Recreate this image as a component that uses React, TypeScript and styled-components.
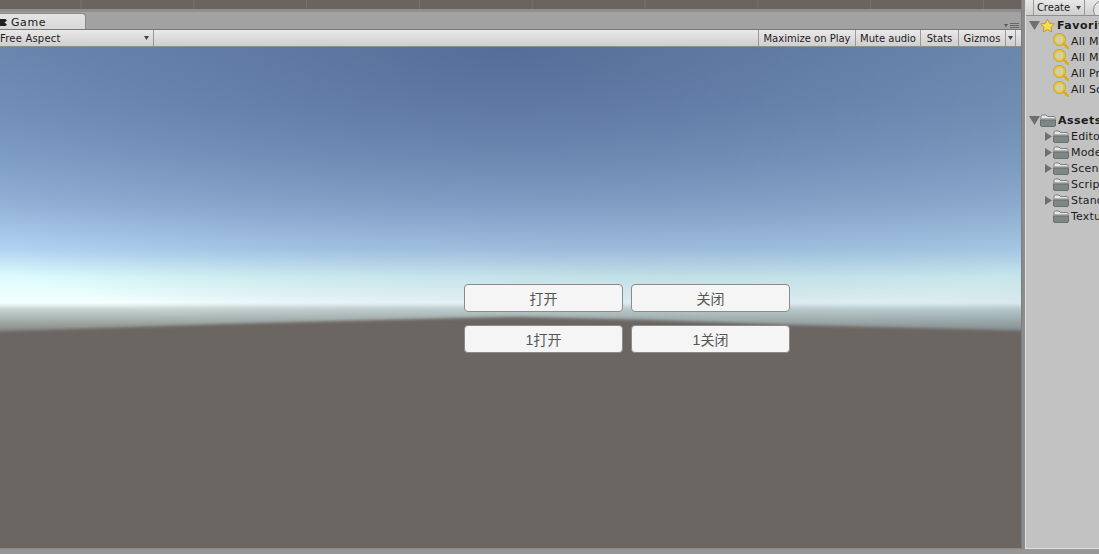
import styled, { createGlobalStyle } from 'styled-components';

const GlobalStyle = createGlobalStyle`
  html, body { margin: 0; padding: 0; height: 100%; overflow: hidden; }
  #root { height: 100%; }
`;

const Editor = styled.div`
  width: 1099px;
  height: 554px;
  display: flex;
  flex-direction: column;
  background: #979797;
  font-family: "DejaVu Sans", sans-serif;
  font-size: 10px;
  color: #1c1c1c;
  overflow: hidden;
`;
const Main = styled.div`
  flex: 1;
  display: flex;
  min-height: 0;
`;
const BottomStrip = styled.div`
  height: 5px;
  background: #979797;
`;
const GamePanel = styled.div`
  width: 1021px;
  display: flex;
  flex-direction: column;
`;
const SceneStrip = styled.div`
  height: 9px;
  background: repeating-linear-gradient(90deg, #6b635e 0, #6b635e 80px, #77716c 81px, #6b635e 82px, #6b635e 112.8px);
`;
const TabBar = styled.div`
  height: 20px;
  box-sizing: border-box;
  display: flex;
  align-items: flex-end;
  justify-content: space-between;
  background: #a2a2a2;
  border-top: 3px solid #8f8f8f;
`;
const Tab = styled.div`
  width: 86px;
  height: 16px;
  box-sizing: border-box;
  display: flex;
  align-items: center;
  gap: 4px;
  padding-top: 2px;
  background: linear-gradient(#e4e4e4, #d8d8d8);
  border: 1px solid #8a8a8a;
  border-left: 0;
  border-bottom: 0;
  border-radius: 0 4px 0 0;
  font-size: 11px;
  letter-spacing: 0.6px;
`;
const TabMenu = styled.div`
  align-self: flex-start;
  margin: 11px 2px 0 0;
  display: flex;
`;
const Toolbar = styled.div`
  height: 18px;
  box-sizing: border-box;
  display: flex;
  align-items: stretch;
  background: linear-gradient(#e9e9e9, #cfcfcf);
  border-top: 1px solid #777;
  border-bottom: 1px solid #8f8f8f;
`;
const Aspect = styled.div`
  width: 154px;
  box-sizing: border-box;
  display: flex;
  align-items: center;
  justify-content: space-between;
  padding-right: 4px;
  border-right: 1px solid #999;
  letter-spacing: 0.2px;
`;
const ToolSpacer = styled.div<{ $width?: number }>`
  flex: ${(p) => (p.$width ? `0 0 ${p.$width}px` : '1')};
`;
const ToolButton = styled.div<{ $width: number; $closed?: boolean }>`
  width: ${(p) => p.$width}px;
  box-sizing: border-box;
  display: flex;
  align-items: center;
  justify-content: center;
  border-left: 1px solid #999;
  border-right: ${(p) => (p.$closed ? '1px solid #999' : '0')};
`;
const Viewport = styled.div`
  flex: 1;
  position: relative;
  overflow: hidden;
  box-sizing: border-box;
  padding: 237px 0 0 464px;
  background:
    radial-gradient(ellipse 760px 300px at 50% 0, rgba(66, 88, 132, 0.62), rgba(66, 88, 132, 0) 100%),
    linear-gradient(90deg, rgba(120, 150, 175, 0) 45%, rgba(120, 150, 175, 0.22) 100%),
    linear-gradient(#7391b9 0, #7b9ac3 60px, #88a8d0 110px, #9ab9de 155px, #b6d8f6 203px, #dcfcfb 230px, #f4ffff 256px, #c6d6d3 262px, #a0a8a5 275px, #7c7e7a 287px);
  border-bottom: 1px solid #8a8a8a;
`;
const GroundBlur = styled.div`
  position: absolute;
  inset: 0;
  filter: blur(1.5px);
`;
const Ground = styled.div`
  position: absolute;
  inset: 0 -10px -10px -10px;
  background: #6c6662;
  clip-path: polygon(0 285px, 240px 277px, 470px 271px, 530px 270px, 660px 273px, 800px 278px, 1041px 284px, 1041px 100%, 0 100%);
`;
const ButtonGrid = styled.div`
  position: relative;
  display: grid;
  grid-template-columns: 159px 159px;
  grid-auto-rows: 28px;
  gap: 13px 8px;
`;
const GameButton = styled.button`
  margin: 0;
  padding: 0;
  background: #f5f5f5;
  border: 1px solid #8b8b8b;
  border-radius: 4px;
  color: #555;
  font-family: "Liberation Sans", "Noto Sans CJK SC", sans-serif;
  font-size: 14px;
`;
const Splitter = styled.div`
  width: 3px;
  background: #8b8b8b;
  border-left: 1px solid #7d7d7d;
  flex-shrink: 0;
`;
const ProjectPanel = styled.div`
  flex: 1;
  display: flex;
  flex-direction: column;
  min-width: 0;
  background: #c2c2c2;
  border-left: 1px solid #e0e0e0;
  border-bottom: 1px solid #e0e0e0;
`;
const ProjectBar = styled.div`
  height: 15px;
  flex-shrink: 0;
  display: flex;
  align-items: stretch;
  gap: 8px;
  padding-left: 7px;
  background: linear-gradient(#e8e8e8, #cfcfcf);
  border-bottom: 1px solid #8f8f8f;
  overflow: hidden;
`;
const CreateButton = styled.div`
  width: 52px;
  box-sizing: border-box;
  flex-shrink: 0;
  display: flex;
  align-items: center;
  justify-content: center;
  gap: 6px;
  border-left: 1px solid #999;
  border-right: 1px solid #999;
`;
const SearchStub = styled.div`
  width: 20px;
  height: 20px;
  flex-shrink: 0;
  box-sizing: border-box;
  border: 1px solid #888;
  border-radius: 50%;
  background: #e4e4e4;
`;
const Tree = styled.div`
  padding-top: 1px;
  display: flex;
  flex-direction: column;
  white-space: nowrap;
  overflow: hidden;
`;
const TreeRow = styled.div<{ $root?: boolean; $gapAbove?: number }>`
  height: 16px;
  flex-shrink: 0;
  display: flex;
  align-items: center;
  margin-top: ${(p) => p.$gapAbove ?? 0}px;
  padding-left: ${(p) => (p.$root ? 3 : 18)}px;
  font-size: 11px;
  letter-spacing: 0.2px;
  svg { flex-shrink: 0; }
`;
const Label = styled.span<{ $bold?: boolean }>`
  margin-left: 2px;
  font-weight: ${(p) => (p.$bold ? 700 : 400)};
  letter-spacing: ${(p) => (p.$bold ? 0.5 : 0.2)}px;
`;
const ArrowSlot = styled.span<{ $width: number }>`
  width: ${(p) => p.$width}px;
  height: 11px;
  display: flex;
  flex-shrink: 0;
`;

const OpenArrow = () => (
  <svg width="11" height="11" viewBox="0 0 11 11">
    <path d="M0 1H11L5.5 10Z" fill="#6f6f6f" />
  </svg>
);

const ClosedArrow = () => (
  <svg width="9" height="11" viewBox="0 0 9 11">
    <path d="M1 1L8 5.5L1 10Z" fill="#6f6f6f" />
  </svg>
);

const Caret = () => (
  <svg width="5" height="4" viewBox="0 0 5 4">
    <path d="M0 0H5L2.5 4Z" fill="#444" />
  </svg>
);

const Star = () => (
  <svg width="15" height="15" viewBox="0 0 17 16">
    <path
      d="M8.5 .8L11 5.6L16.3 6.3L12.4 10L13.4 15.2L8.5 12.7L3.6 15.2L4.6 10L.7 6.3L6 5.6Z"
      fill="#f8dc4a"
      stroke="#b8922a"
      strokeWidth="1"
    />
  </svg>
);

const Magnifier = () => (
  <svg width="16" height="16" viewBox="0 0 16 16">
    <circle cx="6.5" cy="6.5" r="5" fill="#d6cfa6" stroke="#e6c42a" strokeWidth="2" />
    <circle cx="6.5" cy="6.5" r="6.2" fill="none" stroke="#a88a20" strokeWidth="0.5" />
    <path d="M10.5 10.5L15 15" stroke="#d9ae18" strokeWidth="2.6" strokeLinecap="round" />
  </svg>
);

const Folder = () => (
  <svg width="16" height="13" viewBox="0 0 16 13">
    <path d="M1 2.5Q1 1 2.5 1H6L7.5 2.5H14Q15 2.5 15 3.5V6H1Z" fill="#e4e8e8" stroke="#7a7e7e" strokeWidth="1" />
    <path d="M2 4.5H14" stroke="#aab0b0" strokeWidth="1" />
    <path d="M.5 6H15.5V11Q15.5 12.5 14 12.5H2Q.5 12.5 .5 11Z" fill="#7f8786" stroke="#6a6e6e" strokeWidth="1" />
  </svg>
);

const TabGlyph = () => (
  <svg width="7" height="9" viewBox="0 0 7 9">
    <path d="M0 1H5.5L7 2.5L4.5 4.5L7 6.5L5.5 8H0Z" fill="#222" />
  </svg>
);

const MenuGlyph = () => (
  <svg width="15" height="5" viewBox="0 0 15 5">
    <path d="M0 1H4L2 4Z" fill="#555" />
    <path d="M6 .5H15M6 2.5H15M6 4.5H15" stroke="#666" strokeWidth="1" />
  </svg>
);

const assets: { name: string; arrow: boolean }[] = [
  { name: 'Editor', arrow: true },
  { name: 'Models', arrow: true },
  { name: 'Scenes', arrow: true },
  { name: 'Scripts', arrow: false },
  { name: 'Standard Assets', arrow: true },
  { name: 'Textures', arrow: false },
];

const favorites = ['All Materials', 'All Models', 'All Prefabs', 'All Scripts'];

export default function App() {
  return (
    <>
      <GlobalStyle />
      <Editor>
        <Main>
          <GamePanel>
            <SceneStrip />
            <TabBar>
              <Tab>
                <TabGlyph />
                Game
              </Tab>
              <TabMenu>
                <MenuGlyph />
              </TabMenu>
            </TabBar>
            <Toolbar>
              <Aspect>
                Free Aspect
                <Caret />
              </Aspect>
              <ToolSpacer />
              <ToolButton $width={97}>Maximize on Play</ToolButton>
              <ToolButton $width={65}>Mute audio</ToolButton>
              <ToolButton $width={38}>Stats</ToolButton>
              <ToolButton $width={47}>Gizmos</ToolButton>
              <ToolButton $width={11} $closed>
                <Caret />
              </ToolButton>
              <ToolSpacer $width={5} />
            </Toolbar>
            <Viewport>
              <GroundBlur>
                <Ground />
              </GroundBlur>
              <ButtonGrid>
                <GameButton>打开</GameButton>
                <GameButton>关闭</GameButton>
                <GameButton>1打开</GameButton>
                <GameButton>1关闭</GameButton>
              </ButtonGrid>
            </Viewport>
          </GamePanel>
          <Splitter />
          <ProjectPanel>
            <ProjectBar>
              <CreateButton>
                Create
                <Caret />
              </CreateButton>
              <SearchStub />
            </ProjectBar>
            <Tree>
              <TreeRow $root>
                <ArrowSlot $width={11}>
                  <OpenArrow />
                </ArrowSlot>
                <Star />
                <Label $bold>Favorites</Label>
              </TreeRow>
              {favorites.map((name) => (
                <TreeRow key={name}>
                  <ArrowSlot $width={9} />
                  <Magnifier />
                  <Label>{name}</Label>
                </TreeRow>
              ))}
              <TreeRow $root $gapAbove={15}>
                <ArrowSlot $width={11}>
                  <OpenArrow />
                </ArrowSlot>
                <Folder />
                <Label $bold>Assets</Label>
              </TreeRow>
              {assets.map((a) => (
                <TreeRow key={a.name}>
                  <ArrowSlot $width={9}>{a.arrow && <ClosedArrow />}</ArrowSlot>
                  <Folder />
                  <Label>{a.name}</Label>
                </TreeRow>
              ))}
            </Tree>
          </ProjectPanel>
        </Main>
        <BottomStrip />
      </Editor>
    </>
  );
}
